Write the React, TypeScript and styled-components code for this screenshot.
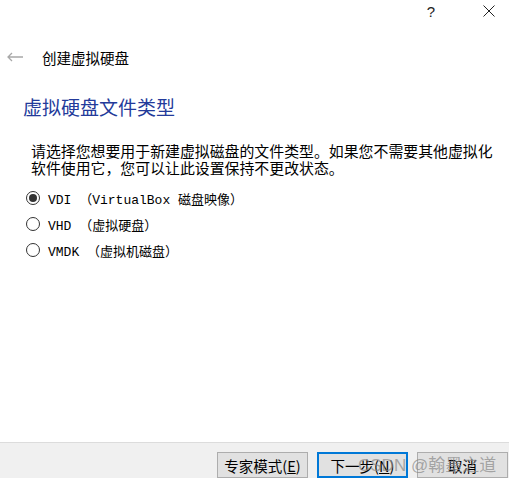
import styled, { createGlobalStyle } from "styled-components";

const GlobalStyle = createGlobalStyle`
  html, body {
    margin: 0;
    padding: 0;
    background: #ffffff;
    font-family: "Noto Sans CJK SC", "Liberation Sans", sans-serif;
    color: #000000;
  }
`;

const options = [
  { label: "VDI （VirtualBox 磁盘映像）", checked: true },
  { label: "VHD （虚拟硬盘）", checked: false },
  { label: "VMDK （虚拟机磁盘）", checked: false },
];

const App = () => {
  return (
    <Window>
      <GlobalStyle />
      <TitleBar>
        <TitleButton>?</TitleButton>
        <TitleButton>
          <svg width="12" height="12" viewBox="0 0 12 12">
            <path d="M0.5 0.5 L11.5 11.5 M11.5 0.5 L0.5 11.5" stroke="#222" strokeWidth="1" />
          </svg>
        </TitleButton>
      </TitleBar>
      <NavRow>
        <BackArrow>
          <svg width="16" height="10" viewBox="0 0 16 10">
            <path d="M1 5 H16 M5 1 L1 5 L5 9" stroke="#a8a8a8" strokeWidth="1.3" fill="none" />
          </svg>
        </BackArrow>
        <NavTitle>创建虚拟硬盘</NavTitle>
      </NavRow>
      <Content>
        <PageTitle>虚拟硬盘文件类型</PageTitle>
        <Description>
          请选择您想要用于新建虚拟磁盘的文件类型。如果您不需要其他虚拟化
          <br />
          软件使用它，您可以让此设置保持不更改状态。
        </Description>
        <OptionList>
          {options.map((opt) => (
            <OptionRow key={opt.label}>
              <Radio $checked={opt.checked} />
              <OptionLabel>{opt.label}</OptionLabel>
            </OptionRow>
          ))}
        </OptionList>
      </Content>
      <Footer>
        <Button>专家模式(<u>E</u>)</Button>
        <Button $primary>下一步(<u>N</u>)</Button>
        <Button>取消</Button>
        <Watermark>CSDN @翰墨之道</Watermark>
      </Footer>
    </Window>
  );
};

export default App;

const Window = styled.div`
  width: 509px;
  height: 478px;
  display: flex;
  flex-direction: column;
  overflow: hidden;
`;

const TitleBar = styled.div`
  display: flex;
  justify-content: flex-end;
  height: 24px;
  padding-right: 9px;
  gap: 36px;
`;

const TitleButton = styled.div`
  display: flex;
  align-items: center;
  justify-content: center;
  width: 22px;
  height: 22px;
  font-family: "Liberation Sans", sans-serif;
  font-size: 15px;
  color: #222;
`;

const NavRow = styled.div`
  display: flex;
  align-items: center;
  height: 22px;
  margin-top: 22px;
  padding-left: 7px;
`;

const BackArrow = styled.div`
  display: flex;
  width: 16px;
  margin-right: 19px;
`;

const NavTitle = styled.div`
  font-size: 14.5px;
  color: #000;
`;

const Content = styled.div`
  flex: 1;
  display: flex;
  flex-direction: column;
  padding-left: 23px;
`;

const PageTitle = styled.div`
  margin-top: 27px;
  font-size: 19px;
  line-height: 24px;
  color: #233a9a;
`;

const Description = styled.div`
  margin-top: 23px;
  padding-left: 8px;
  font-size: 14.9px;
  line-height: 17px;
`;

const OptionList = styled.div`
  display: flex;
  flex-direction: column;
  margin-top: 11px;
  padding-left: 3px;
  gap: 4px;
`;

const OptionRow = styled.div`
  display: flex;
  align-items: center;
  height: 22px;
`;

const Radio = styled.span<{ $checked: boolean }>`
  box-sizing: border-box;
  width: 14px;
  height: 14px;
  border: 1px solid #333;
  border-radius: 50%;
  margin-right: 8px;
  display: flex;
  align-items: center;
  justify-content: center;

  &::after {
    content: "";
    display: ${(p) => (p.$checked ? "block" : "none")};
    width: 8px;
    height: 8px;
    border-radius: 50%;
    background: #333;
  }
`;

const OptionLabel = styled.span`
  font-family: "Liberation Mono", "Noto Sans CJK SC", monospace;
  font-size: 13px;
`;

const Footer = styled.div`
  position: relative;
  box-sizing: border-box;
  height: 36px;
  flex-shrink: 0;
  background: #f0f0f0;
  border-top: 1px solid #dcdcdc;
  display: flex;
  justify-content: flex-end;
  align-items: flex-start;
  padding: 9px 1px 0 0;
  gap: 9px;
`;

const Button = styled.div<{ $primary?: boolean }>`
  box-sizing: border-box;
  width: 91px;
  height: 26px;
  background: #e1e1e1;
  border: ${(p) => (p.$primary ? "2px solid #0078d7" : "1px solid #adadad")};
  display: flex;
  align-items: center;
  justify-content: center;
  font-size: 14.5px;
  color: #000;

  u {
    text-decoration: underline;
  }
`;

const Watermark = styled.div`
  position: absolute;
  z-index: 1;
  left: 358px;
  top: 8px;
  font-family: "Liberation Sans", "Noto Sans CJK SC", sans-serif;
  font-size: 17px;
  color: rgba(135, 135, 135, 0.7);
  pointer-events: none;
`;
